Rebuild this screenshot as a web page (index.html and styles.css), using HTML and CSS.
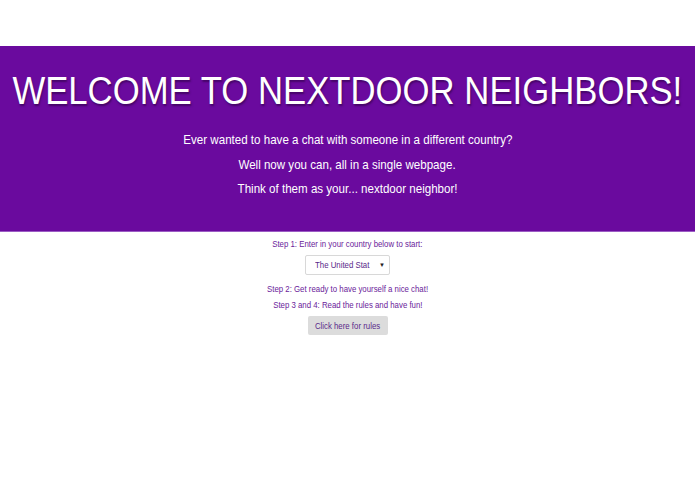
FILE: index.html
```html
<!DOCTYPE html>
<html>
<head>
<meta charset="utf-8">
<link rel="stylesheet" href="styles.css">
</head>
<body>
<header class="hero">
  <h1 class="title">WELCOME TO NEXTDOOR NEIGHBORS!</h1>
  <p class="lead">Ever wanted to have a chat with someone in a different country?</p>
  <p class="lead">Well now you can, all in a single webpage.</p>
  <p class="lead">Think of them as your... nextdoor neighbor!</p>
</header>
<main class="steps">
  <p class="step">Step 1: Enter in your country below to start:</p>
  <div class="select"><span class="select-text">The United Stat</span><span class="caret">&#9660;</span></div>
  <p class="step">Step 2: Get ready to have yourself a nice chat!</p>
  <p class="step">Step 3 and 4: Read the rules and have fun!</p>
  <button class="rules"><span class="rules-text">Click here for rules</span></button>
</main>
</body>
</html>
```
FILE: styles.css
```css
html, body {
  margin: 0;
  padding: 0;
  background: #ffffff;
  font-family: "Liberation Sans", Arial, sans-serif;
}
.hero {
  margin-top: 46px;
  height: 186px;
  box-sizing: border-box;
  background: #6a0a9e;
  border-bottom: 1px solid #9b5cc4;
  text-align: center;
  color: #ffffff;
  padding-top: 23px;
  display: flex;
  flex-direction: column;
  align-items: center;
}
.title {
  margin: 0;
  font-weight: normal;
  font-size: 39px;
  line-height: 44px;
  white-space: nowrap;
  flex: none;
  transform: scaleX(0.89);
  text-shadow: 1px 2px 2px rgba(40, 0, 60, 0.55);
}
.lead {
  margin: 0;
  font-size: 13px;
  line-height: 24.5px;
  white-space: nowrap;
  transform: scaleX(0.89);
}
.title + .lead {
  margin-top: 15px;
}
.steps {
  display: flex;
  flex-direction: column;
  align-items: center;
  color: #6a1b9a;
  font-size: 9px;
}
.step {
  margin: 0;
  line-height: 16px;
  white-space: nowrap;
  transform: scaleX(0.87);
}
.steps .step:first-child {
  margin-top: 4px;
}
.select {
  width: 85px;
  height: 20px;
  box-sizing: border-box;
  border: 1px solid #d8d8d8;
  border-radius: 2px;
  margin: 3px 0 6px 0;
  display: flex;
  align-items: center;
  justify-content: space-between;
  padding: 0 4px 0 9px;
  color: #5a2a8a;
}
.select-text {
  display: inline-block;
  white-space: nowrap;
  transform: scaleX(0.87);
  transform-origin: left center;
}
.caret {
  font-size: 6px;
  color: #222;
}
.rules {
  margin-top: 3px;
  width: 80px;
  height: 19px;
  border: none;
  border-radius: 2px;
  background: #dcdcdc;
  color: #5a2a8a;
  font-family: "Liberation Sans", Arial, sans-serif;
  font-size: 9px;
  padding: 0;
}
.rules-text {
  display: inline-block;
  white-space: nowrap;
  transform: scaleX(0.87);
}
```
